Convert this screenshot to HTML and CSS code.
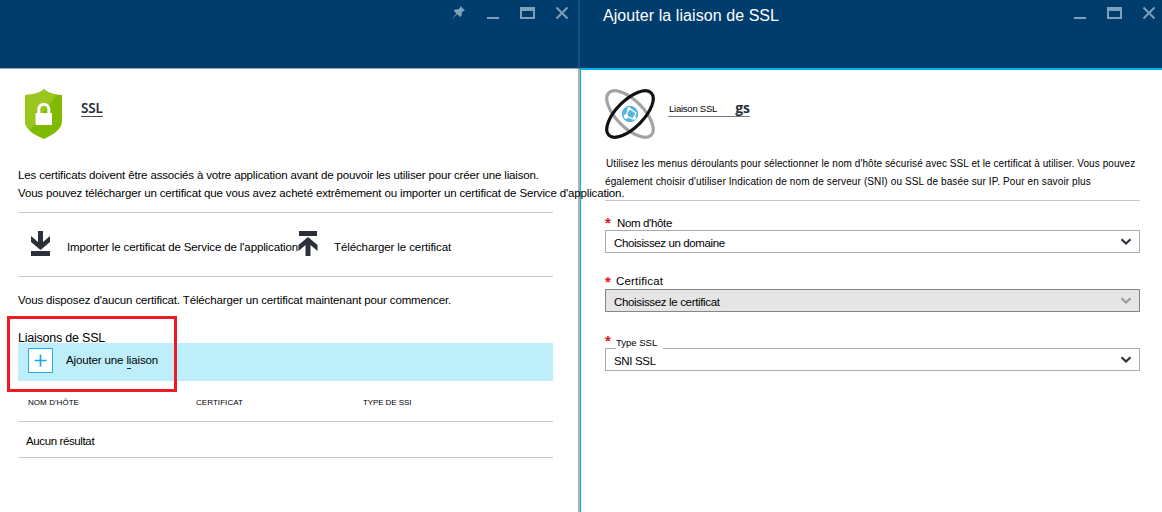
FILE: index.html
```html
<!DOCTYPE html>
<html lang="fr">
<head>
<meta charset="utf-8">
<title>Ajouter la liaison de SSL</title>
<link rel="stylesheet" href="styles.css">
</head>
<body>
<svg class="defs" width="0" height="0">
  <symbol id="window-controls" viewBox="0 0 84 16">
    <rect x="1" y="12" width="12" height="2" fill="currentColor"/>
    <path d="M34 2H49V14H34ZM36 6V12H47V6Z" fill="currentColor" fill-rule="evenodd"/>
    <path d="M70.500 2.500L81.500 13.500M81.500 2.500L70.500 13.500" stroke="currentColor" stroke-width="1.900" fill="none"/>
  </symbol>
  <symbol id="chevron" viewBox="0 0 12 8">
    <path d="M1.500 1.300L6 5.500L10.500 1.300" fill="none" stroke="currentColor" stroke-width="2.200"/>
  </symbol>
</svg>
<main class="blades">
  <section class="blade blade-list">
    <header class="blade-header">
      <svg class="pin" viewBox="0 0 14 14" width="14" height="14"><path d="M9.500 0L14 4.500L12.500 5L10.800 6.600L10.600 9.700L9.300 11L6.200 8.300L.5 13.500L5.400 7.500L2.800 4.700L4.100 3.500L7.400 3.300L9.100 1.500Z" fill="currentColor"/></svg>
      <svg class="controls" width="84" height="16"><use href="#window-controls"/></svg>
    </header>
    <div class="blade-body">
      <div class="heading">
        <svg class="shield" viewBox="0 0 38 50" width="38" height="50">
          <path d="M19 0C23 4 29 5.500 37 6V32C37 41 27 46 19 50C10 46 0 41 0 32V6C9 5.500 15 4 19 0Z" fill="#7fba00"/>
          <path d="M19 0C23 4 27 5.300 32 5.800L5 41C2 38.500 0 36 0 32V6C9 5.500 15 4 19 0Z" fill="#99c71f"/>
          <path d="M13.800 25V20.500C13.800 13.500 23.800 13.500 23.800 20.500V25" fill="none" stroke="#fff" stroke-width="3"/>
          <rect x="10.500" y="24" width="16.500" height="12" rx="1" fill="#fff"/>
        </svg>
        <h1 class="title">SSL</h1>
      </div>
      <div class="intro">
        <p class="intro-first">Les certificats doivent être associés à votre application avant de pouvoir les utiliser pour créer une liaison.</p>
        <p class="intro-second">Vous pouvez télécharger un certificat que vous avez acheté extrêmement ou importer un certificat de Service d'application.</p>
      </div>
      <div class="actions">
        <div class="action import">
          <svg viewBox="0 0 20 25" width="20" height="25"><path d="M0 20H19V25H0ZM7 0H12V11L19 5V11L9.500 19L0 11V5L7 11Z" fill="#2b303a"/></svg>
          <span>Importer le certificat de Service de l'application</span>
        </div>
        <div class="action upload">
          <svg viewBox="0 0 20 25" width="20" height="25"><path d="M0 0H18V5H0ZM6.500 25V14L-.5 20V14L9 6L18.500 14V20L11.500 14V25Z" fill="#2b303a"/></svg>
          <span>Télécharger le certificat</span>
        </div>
      </div>
      <p class="empty-note">Vous disposez d'aucun certificat. Télécharger un certificat maintenant pour commencer.</p>
      <h2 class="section-title">Liaisons de SSL</h2>
      <div class="add-row">
        <svg viewBox="0 0 25 25" width="25" height="25"><rect x=".5" y=".5" width="24" height="24" fill="#fff" stroke="#27abe6"/><path d="M12.500 6.500V18.500M6.500 12.500H18.500" stroke="#1ca8e8" stroke-width="1.700"/></svg>
        <span>Ajouter une <span class="hinted">liaison</span></span>
      </div>
      <div class="table-head"><span>NOM D'HÔTE</span><span>CERTIFICAT</span><span class="type">TYPE DE SSI</span></div>
      <div class="table-row">Aucun résultat</div>
    </div>
    <div class="highlight"></div>
  </section>
  <section class="blade blade-form">
    <header class="blade-header">
      <span class="header-title">Ajouter la liaison de SSL</span>
      <svg class="controls" width="84" height="16"><use href="#window-controls"/></svg>
    </header>
    <div class="blade-body">
      <div class="heading">
        <svg class="orbit" viewBox="0 0 50 50" width="50" height="50">
          <ellipse cx="25" cy="25" rx="30" ry="13.500" transform="rotate(45 25 25)" fill="none" stroke="#a3a3a3" stroke-width="3.200"/>
          <circle cx="25" cy="25" r="8.200" fill="#59b4d9"/>
          <path d="M24 19L31 24L28 30L21 27Z" fill="none" stroke="#fff" stroke-width="1.200"/>
          <circle cx="24" cy="20" r="1.800" fill="#fff"/><circle cx="21" cy="27.500" r="2.300" fill="#fff"/><circle cx="29.500" cy="29" r="1.700" fill="#fff"/>
          <ellipse cx="25" cy="25" rx="30" ry="13.500" transform="rotate(-45 25 25)" fill="none" stroke="#111" stroke-width="3.200"/>
        </svg>
        <div class="resource"><span class="resource-name">Liaison SSL</span><span class="resource-suffix">gs</span></div>
      </div>
      <div class="intro">
        <p class="help-first">Utilisez les menus déroulants pour sélectionner le nom d'hôte sécurisé avec SSL et le certificat à utiliser. Vous pouvez</p>
        <p class="help-second">également choisir d'utiliser Indication de nom de serveur (SNI) ou SSL de basée sur IP. Pour en savoir plus</p>
      </div>
      <div class="field">
        <div class="label"><b>*</b><span class="host-label">Nom d'hôte</span></div>
        <div class="select"><span class="host-value">Choisissez un domaine</span><svg width="12" height="8"><use href="#chevron"/></svg></div>
      </div>
      <div class="field">
        <div class="label certificate"><b>*</b><span>Certificat</span></div>
        <div class="select disabled"><span>Choisissez le certificat</span><svg width="12" height="8"><use href="#chevron"/></svg></div>
      </div>
      <div class="field">
        <div class="label type-label"><b>*</b><span>Type SSL</span></div>
        <div class="select"><span>SNI SSL</span><svg width="12" height="8"><use href="#chevron"/></svg></div>
      </div>
    </div>
  </section>
</main>
</body>
</html>
```
FILE: styles.css
```css
* { box-sizing: border-box; }
body, p, h1, h2 { margin: 0; }
body {
  background: #fff;
  color: #000;
  font: 11.5px "Liberation Sans", Arial, sans-serif;
  overflow: hidden;
}
.defs { display: block; height: 0; }
.blades { display: flex; height: 512px; }
.blade { position: relative; white-space: nowrap; }
.blade-list { width: 580px; z-index: 1; }
.blade-form { width: 582px; }
.blade-header { display: flex; background: #003c6c; color: #819fb7; }
.blade-list .blade-header {
  height: 69px;
  border-right: 2px solid #19507c;
  border-bottom: 1px solid #a0a5aa;
  padding-left: 451px;
}
.blade-form .blade-header {
  height: 70px;
  border-bottom: 2px solid #00b5f0;
  justify-content: space-between;
  padding: 0 5px 0 23px;
}
.pin { margin: 6px 21px 0 0; }
.controls { flex: none; margin-top: 5px; }
.header-title { color: #fff; font-size: 16px; line-height: 20px; padding-top: 6px; letter-spacing: .07px; }

.blade-list .blade-body { height: 443px; border-right: 2px solid #b0b0b0; padding: 20px 25px 0 18px; }
.blade-form .blade-body { height: 442px; border-left: 1px solid #00b5f0; padding: 19px 22px 0 24px; }
.heading { display: flex; height: 50px; }
.shield { margin-left: 7px; }
.title {
  height: 28px;
  margin-left: 18px;
  padding-top: 10px;
  border-bottom: 1px solid #4b4e55;
  color: #2b303a;
  font: 600 13.5px/18px "Noto Sans", "Open Sans", sans-serif;
  letter-spacing: -.15px;
}
.resource {
  display: flex;
  align-items: flex-start;
  justify-content: space-between;
  width: 82px;
  height: 28px;
  margin-left: 13px;
  padding-top: 10px;
  border-bottom: 1px solid #777a80;
}
.resource-name { font-size: 9.5px; line-height: 20px; letter-spacing: -.24px; padding-left: 1px; }
.resource-suffix { color: #2b303a; font: 700 14px/18px "Open Sans", sans-serif; }

.intro { height: 74px; padding-top: 27px; line-height: 18px; border-bottom: 1px solid #c8c8c8; }
.intro-first, .intro-second { letter-spacing: -.151px; }
.blade-form .intro { height: 62px; padding-top: 16px; font-size: 10px; }
.help-first { letter-spacing: .067px; padding-left: 1px; }
.help-second { letter-spacing: .118px; }

.actions { display: flex; height: 64px; padding: 18px 0 0 13px; border-bottom: 1px solid #c8c8c8; letter-spacing: -.13px; }
.action { display: flex; height: 25px; }
.action svg { flex: none; overflow: visible; }
.action span { line-height: 18px; padding-top: 7px; }
.import { width: 268px; gap: 16px; }
.upload { gap: 15px; letter-spacing: -.1px; }
.empty-note { padding-top: 14px; line-height: 18px; letter-spacing: -.139px; }
.section-title { padding-top: 20px; height: 34px; font-size: 12.5px; font-weight: 400; line-height: 18px; letter-spacing: -.22px; position: relative; }
.add-row { display: flex; align-items: flex-start; gap: 13px; height: 38px; padding: 5px 10px; background: #bdeefa; line-height: 24px; letter-spacing: -.135px; }
.hinted { background: linear-gradient(#222, #222) 1px 100% / 4px 1px no-repeat; padding-bottom: 3px; }
.table-head { display: grid; grid-template-columns: 168px 167px 1fr; height: 41px; padding: 13px 10px; font-size: 8px; line-height: 18px; letter-spacing: .06px; border-bottom: 1px solid #c8c8c8; }
.type { letter-spacing: -.1px; }
.table-row { height: 36px; padding: 10px 8px; line-height: 18px; letter-spacing: -.38px; border-bottom: 1px solid #c8c8c8; }
.highlight { position: absolute; left: 7px; top: 316px; width: 170px; height: 76px; border: 3px solid #ed1c24; }

.field { height: 59px; }
.intro + .field { margin-top: 13px; }
.label { display: flex; height: 16px; line-height: 18px; }
.label b { width: 12px; color: #e81123; font-size: 15px; font-weight: 700; line-height: 17px; }
.host-label { letter-spacing: -.35px; }
.certificate span { letter-spacing: .17px; line-height: 16px; }
.certificate b { width: 11px; }
.type-label { position: relative; }
.type-label b { width: 11px; }
.type-label span { height: 20px; width: 47px; background: #fff; font-size: 9.5px; line-height: 22px; }
.select { display: flex; justify-content: space-between; align-items: center; height: 23px; padding: 2px 7px 0 8px; border: 1px solid #adadad; color: #000; letter-spacing: -.34px; }
.host-value { letter-spacing: -.39px; }
.select svg { color: #2b303a; margin-bottom: 1px; }
.disabled { background: #e5e5e5; border-color: #868686; }
.disabled svg { color: #999; }
```
